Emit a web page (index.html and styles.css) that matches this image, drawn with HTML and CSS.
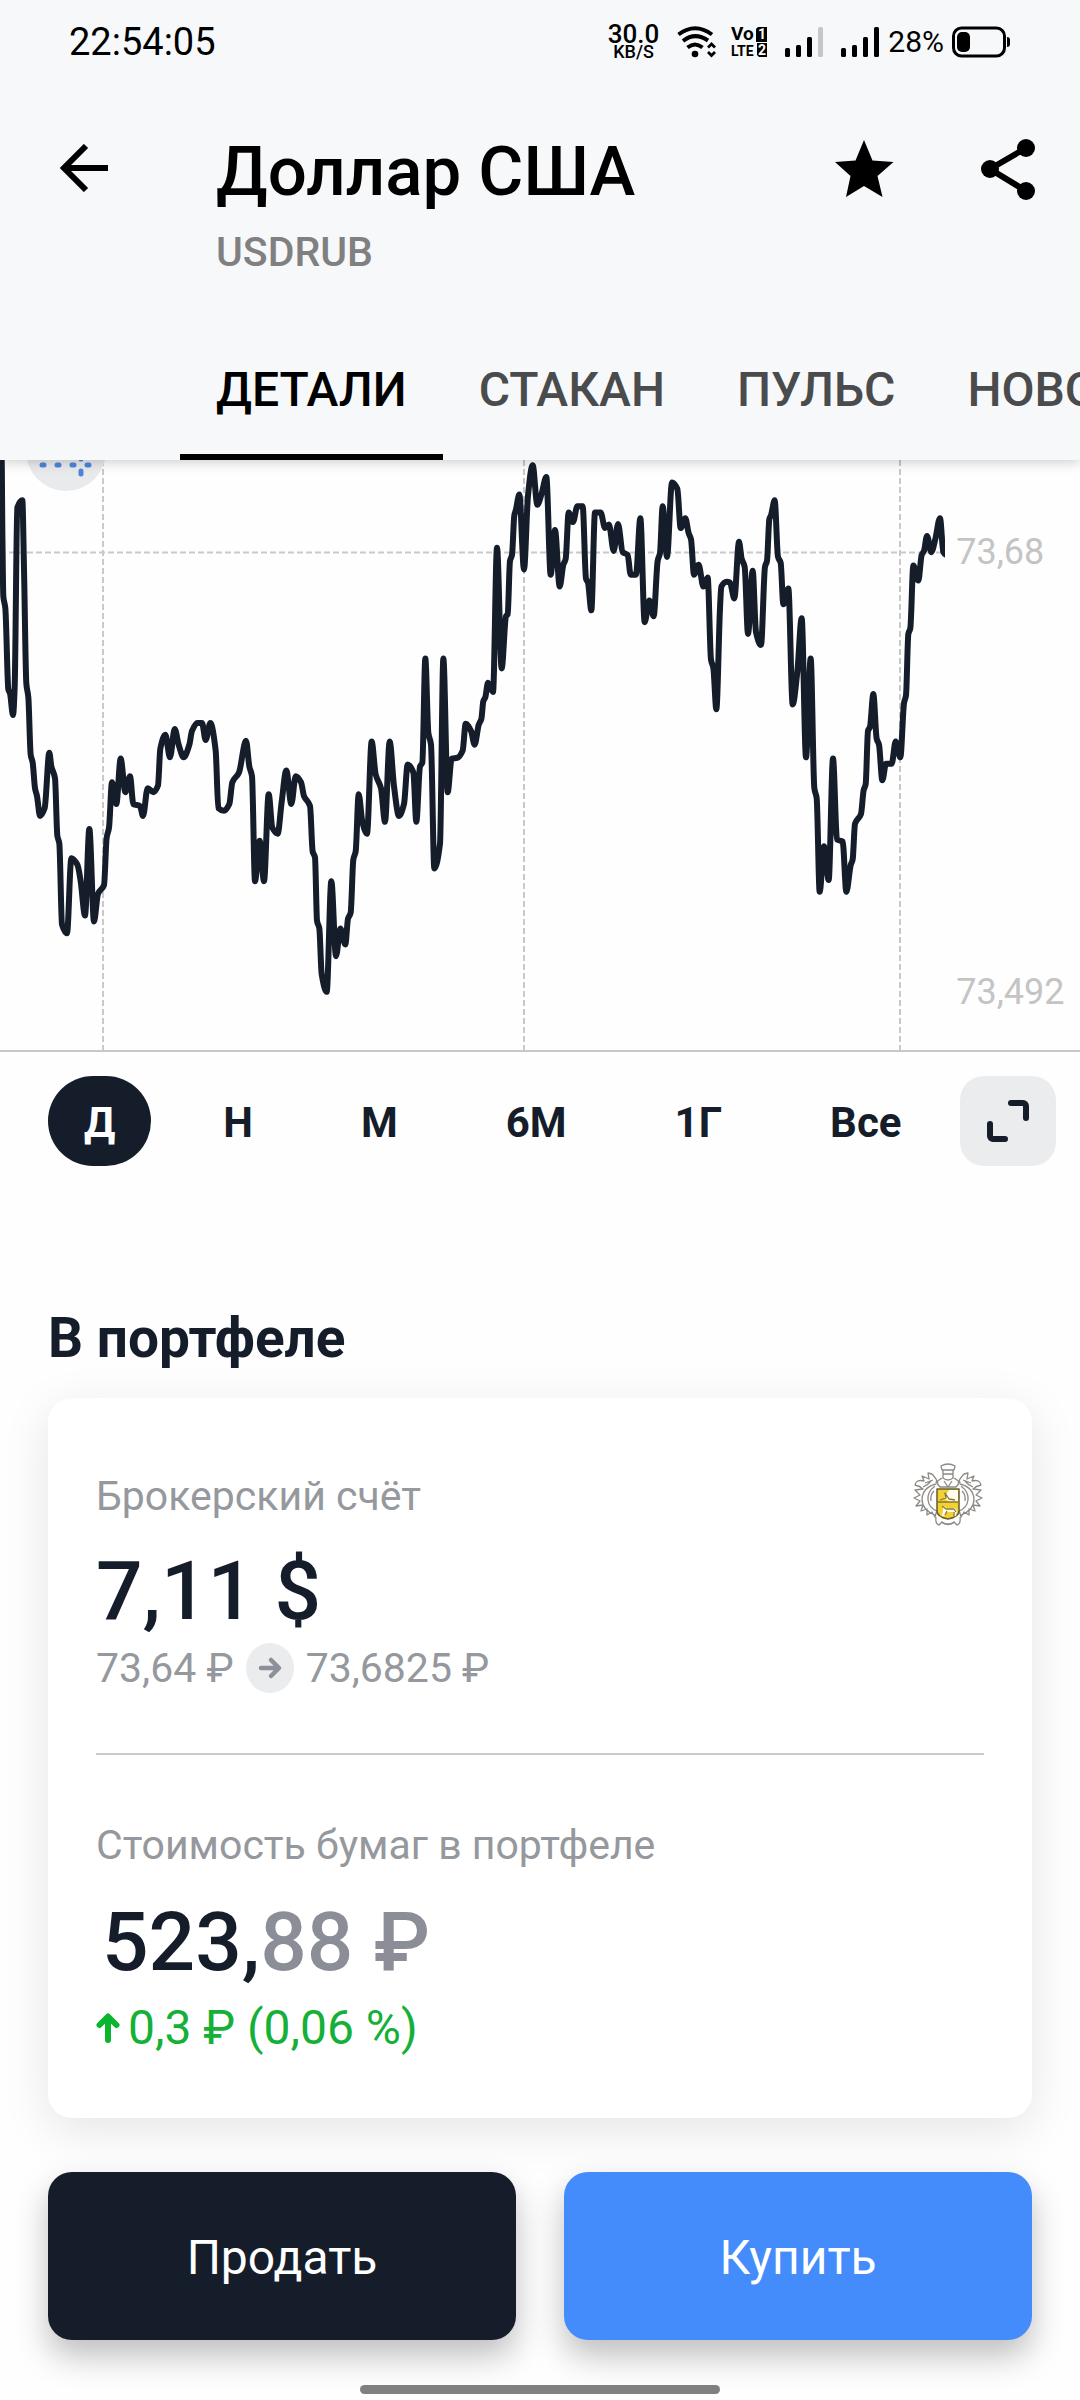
FILE: index.html
```html
<!DOCTYPE html>
<html lang="ru">
<head>
<meta charset="utf-8">
<meta name="viewport" content="width=device-width, initial-scale=1">
<title>Доллар США</title>
<link rel="stylesheet" href="styles.css">
<script src="chart.js" defer></script>
</head>
<body>
<header class="header">
  <div class="status">
    <time class="clock">22:54:05</time>
    <div class="indicators">
      <div class="speed"><span class="speed-value">30.0</span><span class="speed-unit">KB/S</span></div>
      <svg class="wifi" width="40" height="32" viewBox="0 0 40 32" fill="none" stroke="#000" stroke-width="4">
        <path d="M1.500 8.500Q18-4 35 8.500"/><path d="M6 15Q18 5.500 31 14.500"/><path d="M10.500 21.500Q18 15.500 25.500 21.500"/>
        <circle cx="18" cy="28" r="3.300" fill="#000" stroke="none"/>
        <path d="M31 21.500l3.500-3.500 3.500 3.500M31 26l3.500 3.500 3.500-3.500" stroke-width="2.800"/>
      </svg>
      <svg class="volte" width="38" height="32" viewBox="0 0 38 32">
        <text x="0" y="14">Vo</text><text x="0" y="30" class="volte-lte">LTE</text>
        <path d="M27 1h9v15h-11v-13zM26 17h10v14h-8l-2-2z"/>
        <text x="27" y="13" class="volte-sim">1</text><text x="27" y="29" class="volte-sim">2</text>
      </svg>
      <svg class="signal" width="39" height="32" viewBox="0 0 39 32">
        <rect x="0" y="22" width="5" height="9" rx="1.500"/><rect x="11" y="19" width="5" height="12" rx="1.500"/><rect x="22" y="11" width="5" height="20" rx="1.500"/><rect x="33" y="1" width="5" height="30" rx="1.500" fill="#c6c7c8"/>
      </svg>
      <svg class="signal" width="39" height="32" viewBox="0 0 39 32">
        <rect x="0" y="22" width="5" height="9" rx="1.500"/><rect x="11" y="19" width="5" height="12" rx="1.500"/><rect x="22" y="11" width="5" height="20" rx="1.500"/><rect x="33" y="1" width="5" height="30" rx="1.500"/>
      </svg>
      <span class="percent">28%</span>
      <svg class="battery" width="59" height="32" viewBox="0 0 59 32">
        <rect x="1.500" y="2" width="51" height="28" rx="8" fill="none" stroke="#000" stroke-width="3"/>
        <rect x="5" y="6" width="13" height="20" rx="5"/><path d="M55 11q3 0 3 3v4q0 3-3 3z"/>
      </svg>
    </div>
  </div>
  <div class="bar">
    <button class="icon-button back" aria-label="Назад">
      <svg width="48" height="48" viewBox="0 0 48 48" fill="none" stroke="#000" stroke-width="6"><path d="M48 24H5M26 2L4 24l22 22"/></svg>
    </button>
    <div class="heading">
      <h1 class="title">Доллар США</h1>
      <p class="ticker">USDRUB</p>
    </div>
    <div class="actions">
      <button class="icon-button" aria-label="В избранное">
        <svg width="60" height="60" viewBox="0 0 60 60"><path d="M30 1l8.500 20.500 21 1.500-16 14 5 21L30 47 12 58l4.500-21L1 23l20.500-1.500z"/></svg>
      </button>
      <button class="icon-button" aria-label="Поделиться">
        <svg width="56" height="62" viewBox="0 0 56 62"><path d="M46 10L10 31l36 22" fill="none" stroke="#000" stroke-width="6"/><circle cx="46" cy="10" r="9"/><circle cx="10" cy="31" r="9"/><circle cx="46" cy="53" r="9"/></svg>
      </button>
    </div>
  </div>
  <nav class="tabs">
    <a class="tab tab-active" href="#details">ДЕТАЛИ</a>
    <a class="tab" href="#book">СТАКАН</a>
    <a class="tab" href="#pulse">ПУЛЬС</a>
    <a class="tab" href="#news">НОВОСТИ</a>
  </nav>
</header>

<main>
  <section class="chart" id="details">
    <svg class="plot" viewBox="0 25 3240 1492" preserveAspectRatio="none">
      <defs><clipPath id="plot-area"><rect x="0" y="0" width="2835" height="1520"/></clipPath></defs>
      <path class="grid" d="M309 25V1517M1572 25V1517M2700 25V1517M27 259H2835"/>
      <path class="line" id="price-line" clip-path="url(#plot-area)"/>
    </svg>
    <button class="chart-mode" aria-label="Тип графика">
      <svg width="80" height="80" viewBox="0 0 80 80" stroke="#4c86dc" stroke-width="5" stroke-linecap="round"><path d="M16 54h2M31 54h2M46 54h2M61 54h2M55 44v4M55 60v3"/></svg>
    </button>
    <span class="price-label price-current">73,68</span>
    <span class="price-label price-low">73,492</span>
  </section>

  <div class="toolbar">
    <div class="ranges">
      <button class="range range-active">Д</button>
      <button class="range">Н</button>
      <button class="range">М</button>
      <button class="range">6М</button>
      <button class="range">1Г</button>
      <button class="range">Все</button>
    </div>
    <button class="expand" aria-label="Развернуть">
      <svg width="44" height="44" viewBox="0 0 44 44" fill="none" stroke="#151d2a" stroke-width="6" stroke-linecap="round"><path d="M25 4h12a3 3 0 0 1 3 3v12M4 25v12a3 3 0 0 0 3 3h12"/></svg>
    </button>
  </div>

  <section class="portfolio">
    <h2 class="section-title">В портфеле</h2>
    <article class="card">
      <div class="account">
        <p class="label">Брокерский счёт</p>
        <svg class="crest" width="72" height="66" viewBox="0 0 72 66" fill="none" stroke="#8d8984" stroke-width="1.300" stroke-linejoin="round">
          <path d="M29 3q7-4 14 0l-1 4h-12zM31 7v8q5 4 10 0V7M31 11h10M30 15l-6 4 4 5h16l4-5-6-4M32 18l4 6 4-6"/>
          <path d="M26 20q-2-5-6-9l-4-1 1 6-7-3 2 5q-8-2-9 4 5 1 8 4l-8 1 5 5-6 3 6 3-4 5 7-1-2 6 6-2v6l5-3 3 5 2-7M24 21q-13 3-14 15 0 11 13 16M23 23q-8 6-7 14 1 8 9 11M11 24q5-2 8-6M13 20l8-3M22 28q-4 4-3 10"/>
          <path d="M46 20q2-5 6-9l4-1-1 6 7-3-2 5q8-2 9 4-5 1-8 4l8 1-5 5 6 3-6 3 4 5-7-1 2 6-6-2v6l-5-3-3 5-2-7M48 21q13 3 14 15 0 11-13 16M49 23q8 6 7 14-1 8-9 11M61 24q-5-2-8-6M59 20l-8-3M50 28q4 4 3 10"/>
          <path d="M25 26h22v22q0 6-11 8-11-2-11-8z" fill="#f2d133" stroke="#665c31" stroke-width="1.500"/>
          <path d="M37 27h9v12h-9l-5-4zM31 43l4 2h8l2 3-1 5h-2l-1-4h-6l-3 4h-2l1-6z" fill="#fffdf0" stroke="none"/>
          <path d="M26 39h20M28 37l6-2-1-5 4 6 6 1M30 43l4 3h8l2 3M33 52l2-4M42 49v4" stroke="#8a7628"/>
          <path d="M24 54q-1 7 3 8l3-3q6 4 12 0l3 3q4-1 3-8M29 59q7 5 14 0"/>
        </svg>
      </div>
      <p class="amount">7,11 $</p>
      <p class="prices">
        <span>73,64 ₽</span>
        <svg width="48" height="50" viewBox="0 0 48 50"><ellipse cx="24" cy="25" rx="24" ry="25" fill="#eaecee"/><path d="M15 25h17M25 17l8 8-8 8" fill="none" stroke="#8c909b" stroke-width="4.500" stroke-linecap="round" stroke-linejoin="round"/></svg>
        <span>73,6825 ₽</span>
      </p>
      <hr class="divider">
      <p class="label">Стоимость бумаг в портфеле</p>
      <p class="amount total">523,<span class="fraction">88 ₽</span></p>
      <p class="growth">
        <svg width="24" height="32" viewBox="0 0 24 32" fill="none" stroke="#0ab52f" stroke-width="6" stroke-linecap="round" stroke-linejoin="round"><path d="M12 5v23M3.500 13L12 4.500l8.500 8.500"/></svg>
        <span>0,3 ₽ (0,06 %)</span>
      </p>
    </article>
  </section>
</main>

<footer class="trade">
  <button class="order sell">Продать</button>
  <button class="order buy">Купить</button>
</footer>
<div class="home-bar"></div>
</body>
</html>
```
FILE: chart.js
```js
// Price samples in plot coordinates: "x,y" pairs, left to right.
const samples = `
5,25 7,200 10,370 16,400 25,605 30,615 39,670 44,600 52,145 67,127 72,300 79,590 85,625 92,770 98,790 105,855 111,875 120,925 134,905 148,765 154,800 165,830 172,975 178,995 186,1200 201,1222 214,1032 232,1048 242,1090 255,1177 268,958 282,1192 294,1122 312,1100 320,980 327,955 336,840 349,895 362,780 376,865 390,825 400,895 420,900 429,925 443,855 460,865 474,848 481,755 496,720 510,777 524,705 536,745 551,777 568,745 576,710 592,690 606,690 617,733 631,690 647,760 655,905 672,912 688,895 697,840 717,815 738,735 748,800 756,825 765,1090 779,988 792,1090 806,870 817,955 833,970 845,890 859,810 874,895 887,825 903,840 912,875 930,900 938,1015 945,1030 951,1190 958,1210 965,1325 980,1370 994,1090 1008,1280 1021,1210 1036,1250 1044,1185 1052,1170 1060,1035 1067,1015 1076,870
1087,940 1101,970 1115,737 1127,820 1143,855 1155,940 1169,737 1182,850 1197,925 1212,895 1223,795 1240,815 1249,940 1260,800 1267,790 1276,527 1285,715 1293,745 1303,1058 1320,995 1330,527 1343,865 1355,780 1372,778 1388,760 1397,692 1413,710 1424,745 1436,695 1444,680 1450,635 1456,625 1464,588 1479,612 1491,247 1505,552 1518,420 1523,415 1530,280 1536,265 1543,165 1548,150 1558,112 1572,302 1584,115 1598,38 1612,138 1625,110 1639,68 1652,315 1665,202 1679,345 1690,290 1697,275 1706,158 1719,182 1732,142 1748,142 1758,325 1764,335 1774,405 1785,158 1802,158 1815,197 1827,188 1841,255 1854,187 1868,258 1883,265 1892,315 1908,315 1921,172 1934,435 1948,380 1961,420 1973,280 1980,260 1988,142 2001,270 2016,82 2032,98 2042,197 2056,172 2066,210 2073,225 2082,315 2096,290 2110,345 2123,322 2133,530 2140,550 2149,655 2160,400
2164,345 2180,333 2190,335 2203,375 2217,232 2225,275 2234,295 2244,465 2258,305 2268,460 2283,493 2295,295 2301,280 2308,175 2313,165 2324,127 2334,270 2342,285 2350,390 2365,350 2378,643 2392,560 2405,425 2418,777 2432,527 2443,855 2450,880 2459,1117 2472,1002 2486,1087 2499,780 2511,985 2528,990 2539,1117 2552,1050 2558,1035 2565,945 2583,920 2591,860 2597,845 2604,710 2610,700 2620,617 2630,730 2637,745 2647,835 2658,793 2675,793 2687,737 2701,777 2712,640 2718,620 2725,465 2731,450 2740,292 2755,330 2765,265 2772,255 2781,217 2794,258 2806,225 2820,172 2830,258 2838,265
`.trim().split(/\s+/).map(pair => pair.split(",").map(Number));

// Monotone cubic interpolation: peaks and troughs get a level tangent.
function slopeAt(i) {
  if (i === 0 || i === samples.length - 1) return 0;
  const [x0, y0] = samples[i - 1];
  const [x1, y1] = samples[i];
  const [x2, y2] = samples[i + 1];
  const before = (y1 - y0) / (x1 - x0);
  const after = (y2 - y1) / (x2 - x1);
  if (before * after <= 0) return 0;
  return 2 * before * after / (before + after);
}

let d = "M" + samples[0].join(",");
for (let i = 1; i < samples.length; i++) {
  const [x0, y0] = samples[i - 1];
  const [x1, y1] = samples[i];
  const third = (x1 - x0) / 3;
  d += `C${x0 + third},${y0 + slopeAt(i - 1) * third} ${x1 - third},${y1 - slopeAt(i) * third} ${x1},${y1}`;
}
document.getElementById("price-line").setAttribute("d", d);
```
FILE: styles.css
```css
* { box-sizing: border-box; }

body {
  margin: 0;
  background: #fefefe;
  color: #151d2a;
  font-family: Roboto, "Liberation Sans", sans-serif;
  overflow-x: hidden;
}

h1, h2, p { margin: 0; }
svg { display: block; flex: none; }
button {
  margin: 0;
  padding: 0;
  border: 0;
  background: none;
  color: inherit;
  font: inherit;
}

/* Header */
.header {
  position: relative;
  z-index: 1;
  background: #f7f8fa;
  color: #000;
  box-shadow: 0 2px 12px rgba(0, 0, 0, 0.2);
}

.status {
  display: flex;
  align-items: center;
  justify-content: space-between;
  height: 84px;
  padding: 0 69px;
}
.clock { font-size: 38px; line-height: 48px; }
.indicators { display: flex; align-items: center; }
.speed { display: flex; flex-direction: column; align-items: center; font-weight: 500; margin-right: 18px; }
.speed-value { font-size: 26px; line-height: 20px; }
.speed-unit { font-size: 18px; line-height: 16px; }
.wifi { margin-right: 14px; }
.volte { margin-right: 16px; overflow: visible; font-size: 19px; font-weight: 700; }
.volte-lte { font-size: 14px; }
.volte-sim { font-size: 14px; fill: #fff; }
.signal { margin-right: 17px; }
.signal + .signal { margin-right: 8px; }
.percent { font-size: 30px; line-height: 32px; margin-right: 8px; }

.bar {
  display: flex;
  align-items: flex-start;
  padding: 48px 44px 0 60px;
}
.back { margin: 12px 108px 0 0; }
.heading { flex: 1; }
.title { font-size: 69px; line-height: 80px; font-weight: 500; }
.ticker { margin-top: 16px; font-size: 41px; line-height: 48px; font-weight: 500; color: #808080; }
.actions { display: flex; align-items: center; gap: 86px; padding-top: 6px; }

.tabs {
  display: flex;
  margin-top: 86px;
  padding-left: 180px;
  overflow: hidden;
}
.tab {
  padding: 0 36px 36px;
  border-bottom: 6px solid transparent;
  color: #4a4b4d;
  font-size: 48px;
  line-height: 56px;
  font-weight: 500;
  text-decoration: none;
}
.tab-active { color: #000; border-color: #000; }

/* Chart */
.chart {
  position: relative;
  border-bottom: 2px solid #c8c8c8;
  overflow: hidden;
}
.plot { width: 100%; height: 590px; }
.plot path { fill: none; vector-effect: non-scaling-stroke; }
.grid { stroke: #c9c9c9; stroke-width: 2; stroke-dasharray: 6 3; }
.line { stroke: #151d2a; stroke-width: 6; stroke-linecap: round; stroke-linejoin: round; }
.chart-mode {
  position: absolute;
  left: 26px;
  top: -49px;
  border-radius: 50%;
  background: #e9eaec;
}
.price-label {
  position: absolute;
  left: 89%;
  margin-left: -5px;
  color: #c4c4c4;
  font-size: 36px;
  line-height: 42px;
}
.price-current { top: 71px; }
.price-low { top: 511px; }

/* Period switch */
.toolbar {
  display: flex;
  justify-content: space-between;
  padding: 24px 24px 0 48px;
}
.ranges { display: flex; gap: 36px; }
.range {
  height: 90px;
  padding: 2px 36px 0;
  border-radius: 45px;
  font-size: 42px;
  font-weight: 700;
}
.range-active { background: #151d2a; color: #fff; }
.expand {
  display: grid;
  place-items: center;
  flex: none;
  width: 96px;
  height: 90px;
  border-radius: 24px;
  background: #eaecee;
}

/* Portfolio */
.portfolio { padding: 140px 48px 0; }
.section-title { font-size: 55px; line-height: 64px; font-weight: 700; }
.card {
  margin-top: 28px;
  padding: 65px 48px 62px;
  border-radius: 24px;
  background: #fff;
  box-shadow: 0 12px 48px rgba(0, 0, 0, 0.1);
}
.account { display: flex; align-items: center; justify-content: space-between; }
.label { font-size: 41px; line-height: 48px; color: #95989d; }
.amount { margin-top: 14px; font-size: 82px; line-height: 96px; font-weight: 500; }
.prices {
  display: flex;
  align-items: center;
  gap: 12px;
  margin-top: 4px;
  font-size: 41px;
  line-height: 48px;
  color: #95989d;
}
.divider { margin: 60px 0 66px; border: 0; border-top: 2px solid #cacaca; }
.total { margin-top: 25px; padding-left: 6px; }
.fraction { color: #8b8e97; }
.growth {
  display: flex;
  align-items: center;
  gap: 8px;
  margin-top: 10px;
  color: #14b038;
  font-size: 48px;
  line-height: 56px;
}

/* Trade buttons */
.trade {
  display: grid;
  grid-template-columns: 1fr 1fr;
  gap: 48px;
  padding: 54px 48px 45px;
}
.order {
  height: 168px;
  padding-top: 2px;
  border-radius: 24px;
  color: #fff;
  font-size: 48px;
  box-shadow: 0 16px 32px rgba(0, 0, 0, 0.25);
}
.sell { background: #151d2a; }
.buy { background: #448bfb; }

.home-bar {
  position: relative;
  width: 33.3333%;
  height: 9px;
  margin: 0 auto 5px;
  border-radius: 5px;
  background: #808080;
}
```
